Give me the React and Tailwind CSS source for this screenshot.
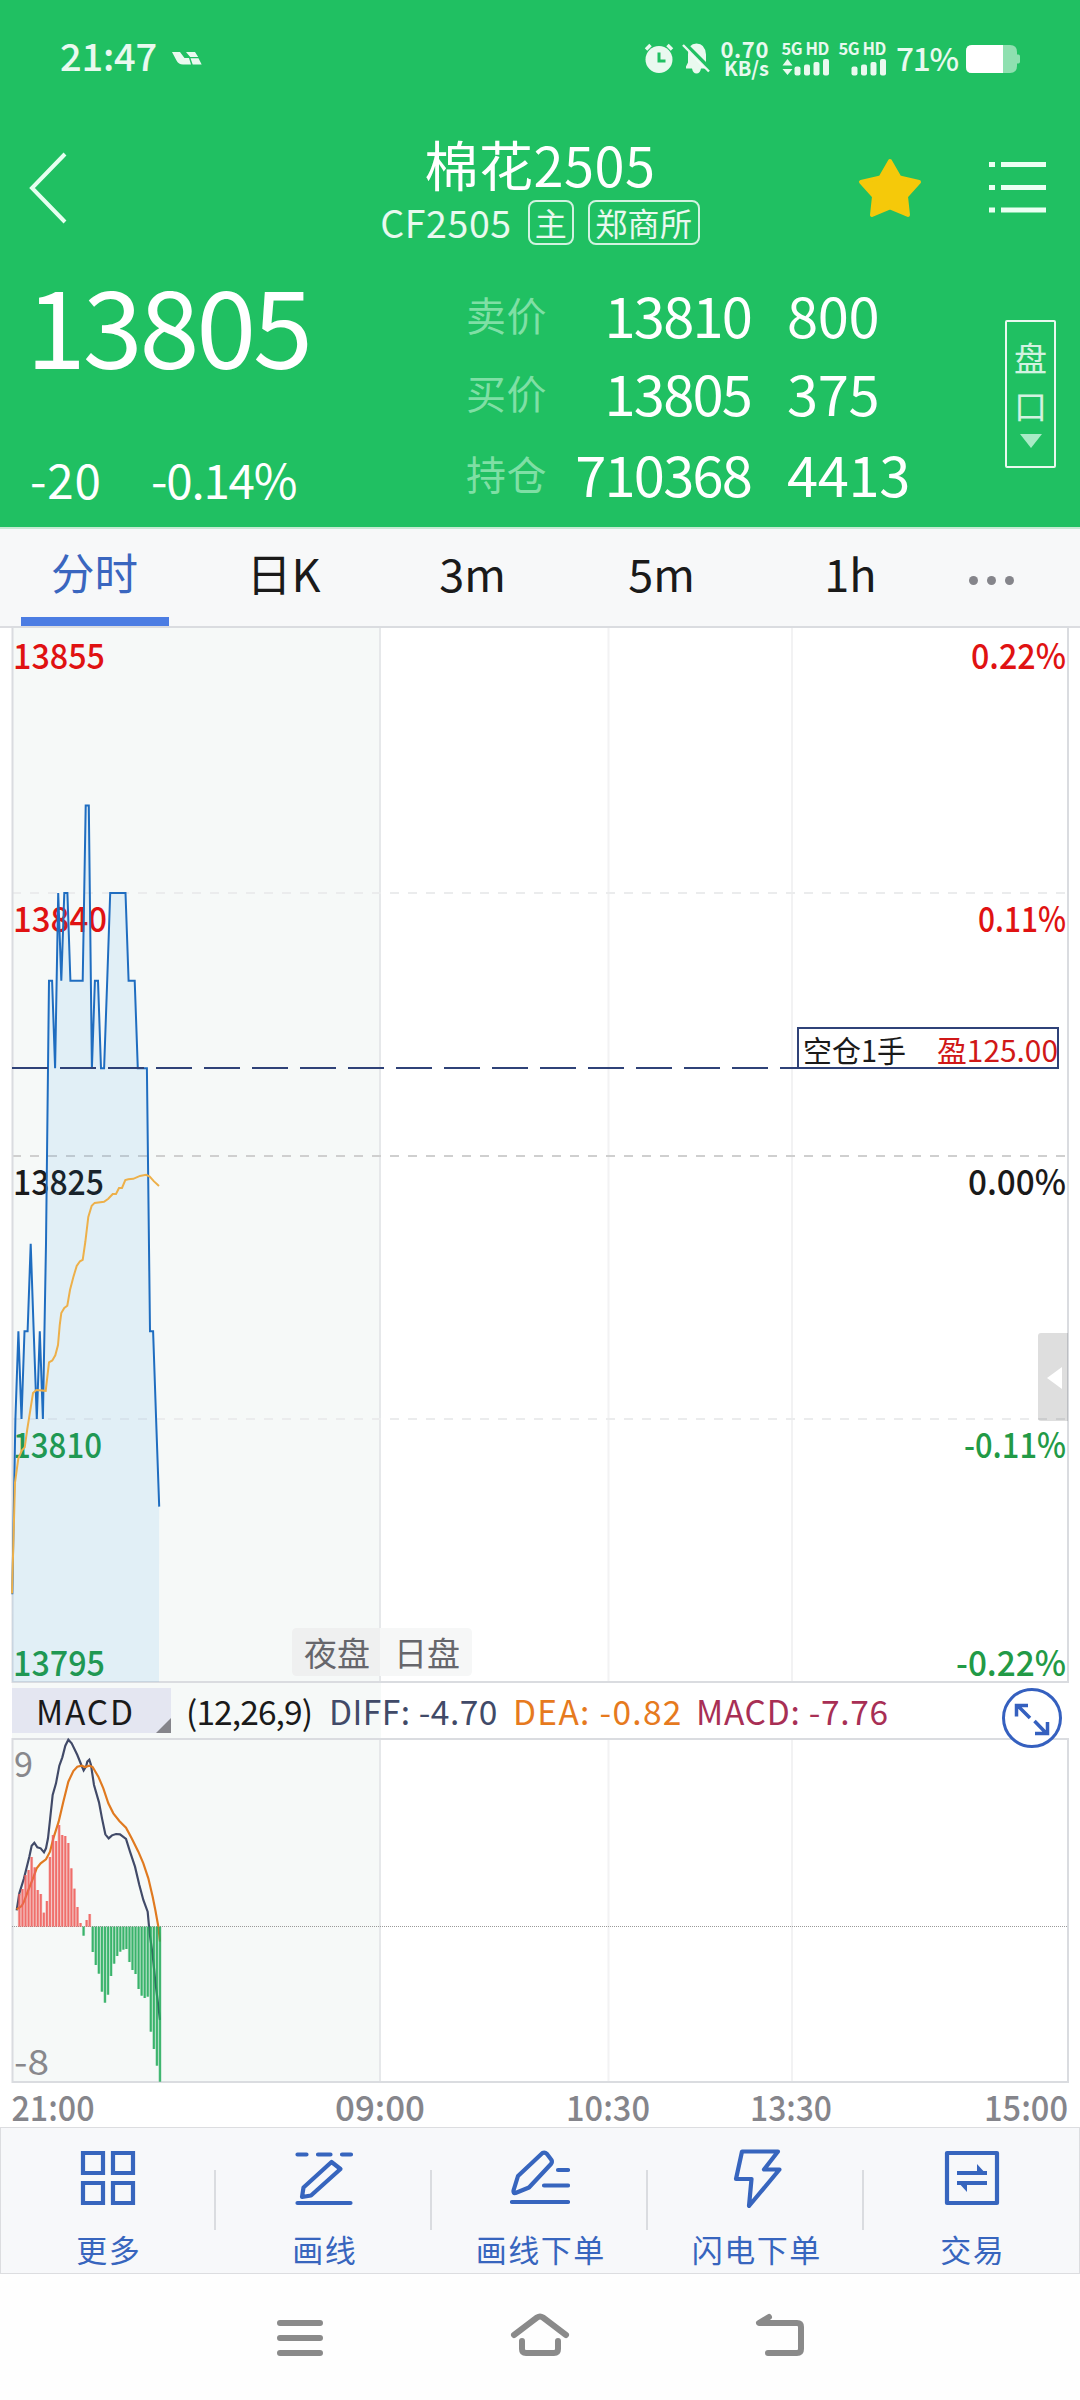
const PRICES = [
  13800, 13810, 13815, 13810, 13815, 13815, 13820, 13815, 13810, 13815, 13810, 13820,
  13835, 13835, 13830, 13840, 13835, 13840, 13840, 13835, 13835, 13835, 13835, 13835,
  13845, 13845, 13830, 13835, 13835, 13830, 13830, 13835, 13840, 13840, 13840, 13840,
  13840, 13840, 13835, 13835, 13835, 13830, 13830, 13830, 13830, 13815, 13815, 13810,
  13805,
];

const AVERAGE =
  "12,1593.5 13.5,1538 15,1482.5 18.3,1458.5 22,1450.3 24.7,1447.4 27.3,1429 30,1412.2 33,1393 36.3,1390 45.7,1390.8 49,1362.3 52.3,1360.5 55.3,1355.3 58,1345 59.7,1325.3 61.3,1313 64.3,1308 67.3,1305.7 70,1290 73.3,1277.2 76.7,1266 80,1261.3 82.7,1259.8 85.3,1242 88.3,1217 91.7,1205.8 94.7,1202.9 104,1201.8 108.3,1198.8 112.7,1194 116,1194 119,1188 122,1188 125.3,1180 128.3,1179.2 133.3,1178.8 140,1175.9 146,1174.8 149.7,1176.6 154,1181.4 159,1185.9";

// histogram heights in thirds of a pixel, positive is up
const BARS = [
  98, 113, 155, 170, 209, 178, 110, 98, 42, 77, 209, 275, 257, 305, 275, 272, 251, 175,
  114, 59, 11, -27, 20, 38, -76, -115, -141, -195, -228, -204, -148, -111, -88, -75, -69,
  -67, -106, -130, -142, -187, -207, -214, -210, -315, -367, -417, -465,
];

const DIFF =
  "50,556 58,505 72,460 88,395 95,362 103,353 112,367 122,370 132,382 138,370 144,340 150,285 158,210 168,175 178,122 187,97 196,62 205,44 215,55 232,90 244,120 251,136 258,125 262,110 268,104 273,120 282,180 297,232 306,280 316,328 326,340 336,331 348,327 360,328 378,342 390,380 405,425 418,480 430,525 443,560 449,625 458,690 466,770 480,885";
const DEA =
  "50,553 65,543 72,530 85,495 99,460 110,430 122,415 138,403 150,380 160,340 176,290 190,230 205,170 220,138 232,125 245,122 255,126 268,122 278,126 295,155 310,190 325,235 340,265 358,288 378,308 395,340 415,380 430,415 445,460 458,515 466,555 475,605 480,650";

const LEVELS = [
  { price: "13855", pct: "0.22%", y: 668.5, color: "#e01212", w: 92, pw: 95 },
  { price: "13840", pct: "0.11%", y: 931.5, color: "#e01212", w: 94, pw: 88 },
  { price: "13825", pct: "0.00%", y: 1194.5, color: "#1a1a1a", w: 91, pw: 98 },
  { price: "13810", pct: "-0.11%", y: 1457.5, color: "#229a46", w: 89, pw: 102 },
  { price: "13795", pct: "-0.22%", y: 1675.5, color: "#229a46", w: 92, pw: 110 },
];

const QUOTES = [
  { label: "卖价", price: "13810", qty: "800" },
  { label: "买价", price: "13805", qty: "375" },
  { label: "持仓", price: "710368", qty: "4413" },
];

const TABS = ["分时", "日K", "3m", "5m", "1h"];

function priceY(price) {
  return 1156 - (price - 13825) * 17.53;
}

function ChartText({ x, y, w, size = 35, weight = 400, color, anchor = "start", children }) {
  return (
    <text
      x={x}
      y={y}
      fontSize={size}
      fontWeight={weight}
      fill={color}
      textAnchor={anchor}
      textLength={w}
      lengthAdjust="spacingAndGlyphs"
    >
      {children}
    </text>
  );
}

function Signal({ arrows }) {
  return (
    <div className="flex flex-col items-end w-[47px]">
      <span className="text-[16.500px] leading-[15px] font-bold whitespace-nowrap tracking-[-0.4px]">
        5G HD
      </span>
      <svg width="47" height="17" viewBox="0 0 47 17" fill="currentColor" className="mt-[3px]">
        {arrows && <path d="M5.5 0l5 6.500h-10zM5.500 16l5-6h-10z" />}
        <rect x="12.500" y="7.500" width="6" height="9" rx="2" />
        <rect x="22" y="5.500" width="6" height="11" rx="2" />
        <rect x="31.500" y="3" width="6" height="13.500" rx="2" />
        <rect x="41" y="0" width="6" height="16.500" rx="2" />
      </svg>
    </div>
  );
}

function StatusBar() {
  return (
    <div className="h-[116px] flex items-center justify-between pl-[60px] pr-[60px] text-white/90">
      <div className="flex items-center">
        <span className="w-[96px] text-[38px] leading-none font-medium tracking-[-0.2px] -mt-[6px]">21:47</span>
        <svg width="30" height="13" viewBox="0 0 30 13" fill="currentColor" className="ml-[16px] mt-[1px]">
          <path d="M0 0h8l4.500 6h4.500l2 6.500h-8Q6.500 12.500 4.500 8.500z" />
          <path d="M14 0h9l3.200 5h-8zM18.500 6.300h8l3.200 6.200h-9z" />
        </svg>
      </div>
      <div className="flex items-center">
        <svg width="30" height="30" viewBox="0 0 30 30" fill="none" stroke="currentColor">
          <circle cx="15" cy="16.500" r="13.500" fill="currentColor" stroke="none" />
          <path d="M2 6.500l4.500-4.500M28 6.500L23.500 2" strokeWidth="3.500" />
          <path d="M15 9.500v8.500h6.500" stroke="#20c062" strokeWidth="3" />
        </svg>
        <svg width="28" height="32" viewBox="0 0 28 32" fill="currentColor" className="ml-[8px]">
          <path d="M4 26.500v-2l2-4v-8Q6 1.500 14.500 1.500T24 12.500v8l2 4v2h-7q-1 5-4.500 5t-4.500-5z" />
          <path d="M1.500 1L28.500 28" stroke="#20c062" strokeWidth="5" />
          <path d="M1 3L27 29.500" stroke="currentColor" strokeWidth="2.400" />
        </svg>
        <div className="ml-[11px] w-[48px] flex flex-col items-end text-[22px] leading-[19px] font-bold">
          <span className="tracking-[0.6px]">0.70</span>
          <span className="text-[20px] whitespace-nowrap">KB/s</span>
        </div>
        <div className="ml-[13px] flex gap-[10px]">
          <Signal arrows />
          <Signal />
        </div>
        <span className="ml-[10px] w-[62px] text-[31.500px] leading-none font-medium tracking-[-1.200px]">71%</span>
        <svg width="54" height="28" viewBox="0 0 54 28" className="ml-[8px] mt-[2px]">
          <path d="M6 0h38q7 0 7 7v2.500h1.500q1.500 0 1.500 2v5q0 2-1.500 2H51V21q0 7-7 7H6q-6 0-6-6V6q0-6 6-6z" fill="#8fe0b0" />
          <path d="M6 0h31v28H6q-6 0-6-6V6q0-6 6-6z" fill="#fff" />
        </svg>
      </div>
    </div>
  );
}

function TitleBar() {
  return (
    <div className="h-[143px] flex items-center justify-between pl-[29px] pr-[34px]">
      <div className="w-[300px]">
        <svg width="38" height="72" viewBox="0 0 38 72" fill="none" stroke="#e6fff0" strokeWidth="4">
          <path d="M36 2L3 36l33 34" />
        </svg>
      </div>
      <div className="flex flex-col items-center">
        <h1 className="mt-[3px] text-[54px] leading-[60px] font-normal tracking-[0.5px] whitespace-nowrap">棉花2505</h1>
        <div className="mt-[7px] flex items-center h-[44px] text-white/90">
          <span className="text-[37.500px] leading-none tracking-[0.6px] -mt-[1px]">CF2505</span>
          <span className="ml-[16px] w-[46px] h-[45px] border-2 border-white/80 rounded-[8px] flex items-center justify-center text-[32px] leading-none pb-[1px]">
            主
          </span>
          <span className="ml-[14px] w-[112px] h-[45px] border-2 border-white/80 rounded-[8px] flex items-center justify-center text-[32px] leading-none tracking-[0.3px] pb-[1px]">
            郑商所
          </span>
        </div>
      </div>
      <div className="w-[295px] flex items-center justify-end">
        <svg width="64" height="62" viewBox="0 0 64 62" fill="#f5c90a" stroke="#f5c90a" strokeWidth="4" strokeLinejoin="round">
          <path d="M32 4L41.500 20.500L61 25L48 39.500L50 58L32 50.500L14 58L16 39.500L3 25L22.500 20.500z" />
        </svg>
        <svg width="57" height="51" viewBox="0 0 57 51" fill="none" stroke="#eafff2" strokeWidth="5" className="ml-[67px]">
          <path d="M0 2.500h6M12 2.500h45M0 25.500h6M12 25.500h45M0 48h6M12 48h45" />
        </svg>
      </div>
    </div>
  );
}

function Quotes() {
  return (
    <div className="h-[268px] flex">
      <div className="w-[466px] pl-[26px] pt-[9px]">
        <div className="text-[108px] leading-[108px] tracking-[-3.200px]">13805</div>
        <div className="mt-[79px] flex pl-[4px] text-[47.500px] leading-[48px]">
          <span className="w-[121px] tracking-[0.8px]">-20</span>
          <span className="tracking-[-1.200px]">-0.14%</span>
        </div>
      </div>
      <div className="w-[480px] grid grid-cols-[82px_203px_1fr] grid-rows-[78px_78px_84px] items-center pt-[16px] text-[56px] leading-none">
        {QUOTES.map((q) => (
          <div key={q.label} className="contents">
            <span className="text-[40px] text-[#7fdfa5] tracking-[0.5px]">{q.label}</span>
            <span className="text-right tracking-[-1.800px]">{q.price}</span>
            <span className="pl-[36px] tracking-[-0.3px]">{q.qty}</span>
          </div>
        ))}
      </div>
      <button className="mt-[61px] ml-[59px] w-[51px] h-[148px] border-2 border-white/90 rounded-[2px] flex flex-col items-center pt-[11px] text-[33px] leading-[48px] text-white/80">
        <span>盘</span>
        <span>口</span>
        <svg width="22" height="14" viewBox="0 0 22 14" fill="#a9ebc6" className="mt-[5px]">
          <path d="M0 0h22L11 14z" />
        </svg>
      </button>
    </div>
  );
}

function Tabs() {
  return (
    <div className="h-[101px] flex bg-[#f7f8f9] border-t-2 border-t-[#c5ead3] border-b-2 border-b-[#dcdde1] text-[45px] leading-none text-[#1a1a1a]">
      {TABS.map((tab, i) => (
        <div
          key={tab}
          className={
            i === 0
              ? "w-[189px] flex flex-col items-center justify-between text-[#3a66bf] text-[43.500px]"
              : "w-[189px] flex flex-col items-center justify-between"
          }
        >
          <span className="mt-[21px]">{tab}</span>
          {i === 0 && <div className="w-[148px] h-[9px] bg-[#4c7de3]" />}
        </div>
      ))}
      <div className="pl-[24px] pt-[47px] flex gap-[9px]">
        <i className="w-[9px] h-[9px] rounded-full bg-[#85858b]" />
        <i className="w-[9px] h-[9px] rounded-full bg-[#85858b]" />
        <i className="w-[9px] h-[9px] rounded-full bg-[#85858b]" />
      </div>
    </div>
  );
}

function PriceChart() {
  const line = PRICES.map((p, i) => `${(12.3 + i * 3.06).toFixed(1)},${priceY(p).toFixed(1)}`).join(" ");

  return (
    <svg width="1080" height="1055" viewBox="0 628 1080 1055" fill="none" className="block overflow-visible">
      <path d="M608.500 628V1682M792 628V1682" stroke="#f2f2f3" strokeWidth="2" />
      <path d="M380 628V1682" stroke="#e6e8ea" strokeWidth="2" />
      <path d="M12 893H1067M12 1419H1067" stroke="#ebeced" strokeWidth="2" strokeDasharray="9 9" />
      <path d="M12 1156H1067" stroke="#cfcfcf" strokeWidth="2" strokeDasharray="9 9" />
      <rect x="12.500" y="627" width="1055.500" height="1055" stroke="#dadce0" strokeWidth="2" />
      {LEVELS.map((l) => (
        <g key={l.price}>
          <ChartText x={13} y={l.y} w={l.w} weight={500} color={l.color}>{l.price}</ChartText>
          <ChartText x={1066} y={l.y} w={l.pw} weight={500} color={l.color} anchor="end">{l.pct}</ChartText>
        </g>
      ))}
      <polygon points={`12,1682 ${line} 159,1682`} fill="#0a8ae6" fillOpacity="0.085" />
      <polyline points={line} stroke="#1f6dc0" strokeWidth="2" />
      <path d="M12 1068H1067" stroke="#2f4278" strokeWidth="2" strokeDasharray="36 12" />
      <polyline points={AVERAGE} stroke="#edb04a" strokeWidth="2" />

      {/* open position */}
      <rect x="798" y="1028" width="260" height="40" fill="#fff" stroke="#2f4278" strokeWidth="2" />
      <ChartText x={803} y={1061.5} w={103} size={30} color="#1a1a1a">空仓1手</ChartText>
      <ChartText x={937} y={1061.5} w={121} size={30} color="#d01818">盈125.00</ChartText>

      {/* collapsed side panel */}
      <path d="M1041 1333H1068V1421H1041Q1038 1421 1038 1418V1336Q1038 1333 1041 1333z" fill="#000" fillOpacity="0.13" />
      <path d="M1047 1378L1062 1367V1389z" fill="#fff" />

      <path d="M297 1628H380V1676H297Q292 1676 292 1671V1633Q292 1628 297 1628z" fill="#eff0f0" />
      <path d="M380 1628H467Q472 1628 472 1633V1671Q472 1676 467 1676H380z" fill="#f6f7f7" />
      <ChartText x={304} y={1666} w={66} size={33} color="#66666b">夜盘</ChartText>
      <ChartText x={394} y={1666} w={66} size={33} color="#66666b">日盘</ChartText>
    </svg>
  );
}

function MacdHeader() {
  return (
    <div className="h-[55px] flex items-start pl-[12px] pt-[5px] text-[33.500px] leading-[46px] whitespace-nowrap text-[#1a1a1a]">
      <div className="relative w-[159px] h-[45px] bg-[#e4e6f1] pl-[24px] tracking-[1.800px]">
        MACD
        <svg width="15" height="15" viewBox="0 0 15 15" className="absolute right-0 bottom-0">
          <path d="M15 0V15H0z" fill="#85858b" />
        </svg>
      </div>
      <span className="w-[143px] pl-[15px] tracking-[-0.900px]">(12,26,9)</span>
      <span className="w-[185px] pl-[15px] tracking-[0.500px] text-[#414a68]">DIFF: -4.70</span>
      <span className="w-[183px] pl-[14px] tracking-[1.300px] text-[#e67a1e]">DEA: -0.82</span>
      <span className="w-[320px] pl-[14px] tracking-[0.700px] text-[#a82f55]">MACD: -7.76</span>
      <svg width="60" height="60" viewBox="0 0 60 60" fill="none" stroke="#3560bf" className="relative z-10 shrink-0">
        <circle cx="30" cy="30" r="28.500" fill="#fff" strokeWidth="3" />
        <path d="M28 30L15 17M14.500 28.500V17.500H26M32.500 33L45 46M45.500 34V45.500H33" strokeWidth="3.500" />
      </svg>
    </div>
  );
}

function MacdChart() {
  return (
    <svg width="1080" height="345" viewBox="0 1738 1080 345" fill="none" className="block overflow-visible">
      <path d="M608.500 1738V2082M792 1738V2082" stroke="#f2f2f3" strokeWidth="2" />
      <path d="M380 1738V2082" stroke="#e6e8ea" strokeWidth="2" />
      <rect x="12.500" y="1739" width="1055.500" height="343" stroke="#dadce0" strokeWidth="2" />
      <ChartText x={14} y={1777} w={19} color="#88888c">9</ChartText>
      <ChartText x={14} y={2075} w={35} color="#88888c">-8</ChartText>
      <path d="M12 1926.500H1067" stroke="#9a9a9a" strokeWidth="1" strokeDasharray="1 1" />
      <g transform="translate(0 1725) scale(0.33333)">
        <polyline points={DIFF} stroke="#414a68" strokeWidth="6.500" />
        <polyline points={DEA} stroke="#e07a20" strokeWidth="6.500" />
        {BARS.map((h, i) => {
          const x = 58 + i * 9.17;
          const y = h > 0 ? 605 - h : 605;
          const color = h > 0 ? "#ee5f5c" : "#25ab5c";
          return (
            <g key={i} fill={color}>
              <rect x={x - 4.6} y={y} width="9.2" height={Math.abs(h)} fillOpacity="0.35" />
              <rect x={x - 2.5} y={y} width="5.500" height={Math.abs(h)} fillOpacity="0.85" />
            </g>
          );
        })}
      </g>
    </svg>
  );
}

function TimeAxis() {
  return (
    <svg width="1080" height="44" viewBox="0 2083 1080 44" className="block overflow-visible">
      <rect x="0" y="2083" width="1080" height="44" fill="#fff" />
      <ChartText x={11.5} y={2121} w={83} weight={500} color="#85858b">21:00</ChartText>
      <ChartText x={380} y={2121} w={90} weight={500} color="#85858b" anchor="middle">09:00</ChartText>
      <ChartText x={608} y={2121} w={84} weight={500} color="#85858b" anchor="middle">10:30</ChartText>
      <ChartText x={791} y={2121} w={82} weight={500} color="#85858b" anchor="middle">13:30</ChartText>
      <ChartText x={1068} y={2121} w={84} weight={500} color="#85858b" anchor="end">15:00</ChartText>
    </svg>
  );
}

const TOOLS = [
  {
    label: "更多",
    icon: <path d="M5 5h20v20H5zM35 5h20v20H35zM5 35h20v20H5zM35 35h20v20H35z" strokeLinejoin="miter" />,
  },
  {
    label: "画线",
    icon: (
      <>
        <path d="M3.500 6.500h9M24 6.500h12.500M48 6.500h9M3.500 55h53" />
        <path d="M37.500 14L46.500 21L17 47.500L8 49L9.500 39.500z" />
      </>
    ),
  },
  {
    label: "画线下单",
    icon: (
      <>
        <path d="M32.500 5Q35 4 37 6L41.500 12Q42.500 14 41 16L19 39.500L5.500 45Q3 45.500 3.500 42.500L8 28z" />
        <path d="M48 22H58M34 37.500H58M2 54H58" />
      </>
    ),
  },
  {
    label: "闪电下单",
    icon: <path d="M16 3.500H52L38 21.500H53.500L23 58L25.500 31H10z" />,
  },
  {
    label: "交易",
    icon: (
      <>
        <path d="M5 5h50v50H5z" />
        <path d="M15 25h30M15 35h30" strokeLinecap="butt" />
        <path d="M35 16L45 27H35zM25 44L15 33H25z" fill="currentColor" stroke="none" />
      </>
    ),
  },
];

function Toolbar() {
  return (
    <div className="h-[147px] grid grid-cols-5 bg-[#f7f8fa] ring-1 ring-inset ring-[#dcdde0] text-[#3765be]">
      {TOOLS.map((tool, i) => (
        <div key={tool.label} className="flex items-center">
          <div className="flex-1 flex flex-col items-center pt-[19px]">
            <svg width="60" height="60" viewBox="0 0 60 60" fill="none" stroke="currentColor" strokeWidth="4.200" strokeLinecap="round" strokeLinejoin="round">
              {tool.icon}
            </svg>
            <span className="mt-[17px] text-[31px] leading-[48px] tracking-[1.500px] -mr-[1.500px]">{tool.label}</span>
          </div>
          {i < 4 && <div className="w-[2px] h-[60px] -ml-[2px] -mt-[1px] bg-[#dadce0]" />}
        </div>
      ))}
    </div>
  );
}

function NavBar() {
  return (
    <div className="h-[126px] bg-[#fefefe] flex items-center justify-center gap-[183px] pt-[1px]">
      <svg width="54" height="54" viewBox="0 0 54 54" fill="none" stroke="#8a8a8a" strokeWidth="6" strokeLinecap="round">
        <path d="M7 12h40M7 27h40M7 42h40" />
      </svg>
      <svg width="60" height="54" viewBox="0 0 60 54" fill="none" stroke="#8a8a8a" strokeWidth="6" strokeLinecap="round">
        <path d="M4 24L27 6.500Q30 4.500 33 6.500L56 24M12 30V38Q12 42 16 42H44Q48 42 48 38V30" />
      </svg>
      <svg width="54" height="54" viewBox="0 0 54 54" fill="none" stroke="#8a8a8a" strokeWidth="6" strokeLinecap="round" strokeLinejoin="round">
        <path d="M16 6L6 12H44Q48 12 48 16V38Q48 42 44 42H15" />
      </svg>
    </div>
  );
}

export default function App() {
  return (
    <div className="w-[1080px] h-[2400px] overflow-hidden flex flex-col bg-white font-['Noto_Sans_CJK_SC',sans-serif]">
      <header className="bg-[#20c062] text-white">
        <StatusBar />
        <TitleBar />
        <Quotes />
      </header>
      <Tabs />
      <section className="bg-[linear-gradient(to_right,#fff_12px,#f6f9f8_12px,#f6f9f8_381px,#fff_381px)]">
        <PriceChart />
        <MacdHeader />
        <MacdChart />
        <TimeAxis />
      </section>
      <Toolbar />
      <NavBar />
    </div>
  );
}
